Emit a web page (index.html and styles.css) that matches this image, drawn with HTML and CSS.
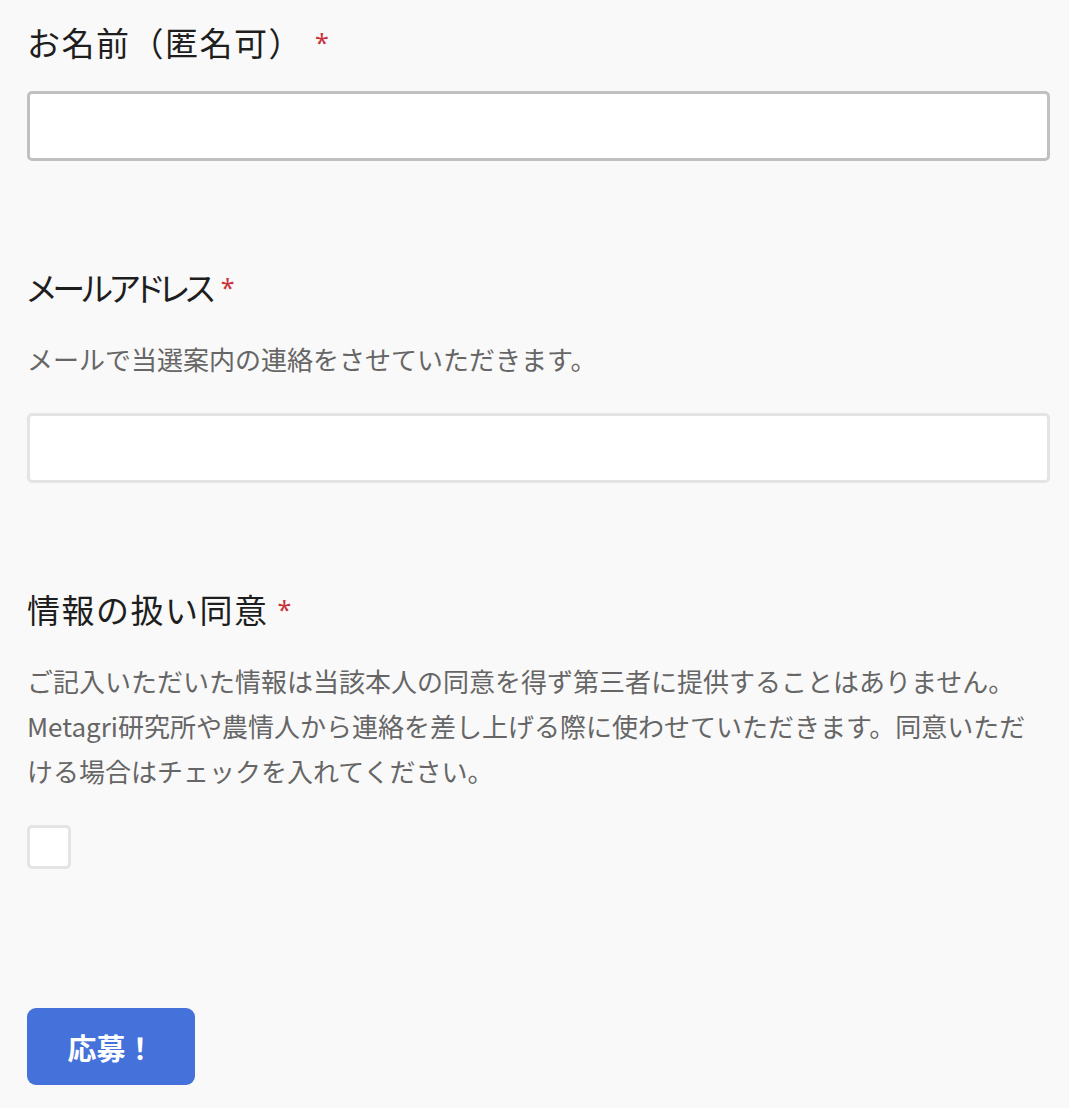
FILE: index.html
```html
<!DOCTYPE html>
<html lang="ja">
<head>
<meta charset="utf-8">
<title>応募フォーム</title>
<link rel="stylesheet" href="styles.css">
</head>
<body>
<form class="form">
  <div class="field">
    <label class="label" for="name">お名前（匿名可） <span class="req req-wide">*</span></label>
    <input class="input input-focus" id="name" type="text">
  </div>
  <div class="field">
    <label class="label" for="email"><span class="tight">メールアドレス</span> <span class="req">*</span></label>
    <p class="desc">メールで当選案内の連絡をさせていただきます。</p>
    <input class="input" id="email" type="email">
  </div>
  <div class="field field-last">
    <label class="label" for="agree">情報の扱い同意 <span class="req">*</span></label>
    <p class="desc">ご記入いただいた情報は当該本人の同意を得ず第三者に提供することはありません。<br>Metagri研究所や農情人から連絡を差し上げる際に使わせていただきます。同意いただける場合はチェックを入れてください。</p>
    <span class="checkbox" id="agree"></span>
  </div>
  <button class="submit" type="button">応募！</button>
</form>
</body>
</html>
```
FILE: styles.css
```css
html, body {
  margin: 0;
  padding: 0;
  background: #f9f9f9;
}
body {
  font-family: "Noto Sans CJK JP", "Noto Sans", sans-serif;
  color: #1e1e1e;
}
.form {
  display: flex;
  flex-direction: column;
  align-items: flex-start;
  padding: 21px 19px 24px 27px;
}
.field {
  display: flex;
  flex-direction: column;
  align-items: flex-start;
  width: 100%;
  margin-bottom: 105px;
}
.field-last {
  margin-bottom: 139px;
}
.label {
  font-size: 33px;
  line-height: 42px;
  height: 42px;
  letter-spacing: 1.5px;
  color: #1e1e1e;
  margin-bottom: 28px;
  white-space: nowrap;
}
.tight {
  font-feature-settings: "palt" 1;
  letter-spacing: -3.3px;
}
.req {
  color: #c8323b;
  font-family: "Noto Sans", "DejaVu Sans", sans-serif;
  font-size: 25px;
  line-height: 1;
  vertical-align: 4px;
  letter-spacing: 0;
}
.req-wide {
  margin-left: 3px;
}
.desc {
  margin: 0 0 32px 0;
  font-size: 26px;
  line-height: 45px;
  color: #666666;
}
.input {
  box-sizing: border-box;
  width: 100%;
  height: 70px;
  margin: 0;
  border: 3px solid #e4e4e4;
  border-radius: 5px;
  background: #ffffff;
  font-size: 24px;
  padding: 0 16px;
  outline: none;
}
.input-focus {
  border-color: #c0c0c0;
}
.checkbox {
  display: block;
  box-sizing: border-box;
  width: 44px;
  height: 44px;
  border: 3px solid #e4e4e4;
  border-radius: 5px;
  background: #ffffff;
}
.submit {
  width: 168px;
  height: 77px;
  border: none;
  border-radius: 9px;
  background: #4471da;
  color: #ffffff;
  font-family: "Noto Sans CJK JP", sans-serif;
  font-size: 29px;
  font-weight: 700;
  cursor: pointer;
}
```
